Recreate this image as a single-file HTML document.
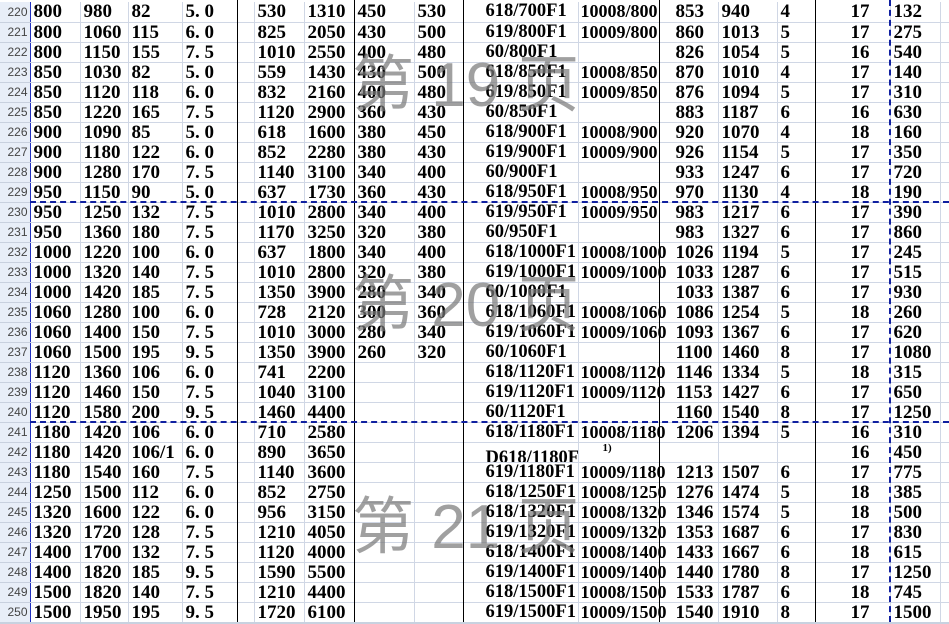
<!DOCTYPE html>
<html><head><meta charset="utf-8"><style>
body{margin:0;width:949px;height:624px;overflow:hidden;background:#fff;position:relative}
table{position:absolute;left:0;top:2px;border-collapse:collapse;table-layout:fixed;width:949px;font-family:"Liberation Serif",serif;font-weight:bold;font-size:19px;color:#000}
tr{height:20px}
td{box-sizing:border-box;height:20px;max-height:20px;line-height:19px;padding:0 0 0 3px;border-right:1px solid #d0d7e5;border-bottom:1px solid #d0d7e5;white-space:nowrap;overflow:hidden;vertical-align:middle}
td.h{background:#e8eef8;color:#444;font:12px "Liberation Sans",sans-serif;text-align:right;padding:0 2px 0 0;border-right:1px solid #2030c0;border-bottom:1px solid #c8d0de}
td.j{padding-left:22px;font-size:18.5px}
td.k{padding-left:2px;font-size:18px;overflow:visible}
td.l{padding-left:16px}
td.o{text-align:right;padding-right:20px}
.v{position:absolute;top:0;width:1px;height:622px;background:#000}
.wm{position:absolute;left:352px;font:62px "Liberation Sans","Noto Sans CJK SC",sans-serif;color:rgba(120,120,120,.7);white-space:pre;line-height:62px}
.dh{position:absolute;left:30px;width:919px;height:0;border-top:2px dashed #1020a0}
</style></head><body>
<table>
<colgroup><col style="width:30px"><col style="width:50px"><col style="width:48px"><col style="width:54px"><col style="width:55px"><col style="width:17px"><col style="width:50px"><col style="width:50px"><col style="width:60px"><col style="width:49px"><col style="width:115px"><col style="width:81px"><col style="width:59px"><col style="width:59px"><col style="width:38px"><col style="width:75px"><col style="width:50px"><col style="width:9px"></colgroup>
<tr><td class="h">220</td><td>800</td><td>980</td><td>82</td><td>5. 0</td><td></td><td>530</td><td>1310</td><td>450</td><td>530</td><td class="j">618/700F1</td><td class="k">10008/800</td><td class="l">853</td><td>940</td><td>4</td><td class="o">17</td><td>132</td><td></td></tr>
<tr><td class="h">221</td><td>800</td><td>1060</td><td>115</td><td>6. 0</td><td></td><td>825</td><td>2050</td><td>430</td><td>500</td><td class="j">619/800F1</td><td class="k">10009/800</td><td class="l">860</td><td>1013</td><td>5</td><td class="o">17</td><td>275</td><td></td></tr>
<tr><td class="h">222</td><td>800</td><td>1150</td><td>155</td><td>7. 5</td><td></td><td>1010</td><td>2550</td><td>400</td><td>480</td><td class="j">60/800F1</td><td class="k"></td><td class="l">826</td><td>1054</td><td>5</td><td class="o">16</td><td>540</td><td></td></tr>
<tr><td class="h">223</td><td>850</td><td>1030</td><td>82</td><td>5. 0</td><td></td><td>559</td><td>1430</td><td>430</td><td>500</td><td class="j">618/850F1</td><td class="k">10008/850</td><td class="l">870</td><td>1010</td><td>4</td><td class="o">17</td><td>140</td><td></td></tr>
<tr><td class="h">224</td><td>850</td><td>1120</td><td>118</td><td>6. 0</td><td></td><td>832</td><td>2160</td><td>400</td><td>480</td><td class="j">619/850F1</td><td class="k">10009/850</td><td class="l">876</td><td>1094</td><td>5</td><td class="o">17</td><td>310</td><td></td></tr>
<tr><td class="h">225</td><td>850</td><td>1220</td><td>165</td><td>7. 5</td><td></td><td>1120</td><td>2900</td><td>360</td><td>430</td><td class="j">60/850F1</td><td class="k"></td><td class="l">883</td><td>1187</td><td>6</td><td class="o">16</td><td>630</td><td></td></tr>
<tr><td class="h">226</td><td>900</td><td>1090</td><td>85</td><td>5. 0</td><td></td><td>618</td><td>1600</td><td>380</td><td>450</td><td class="j">618/900F1</td><td class="k">10008/900</td><td class="l">920</td><td>1070</td><td>4</td><td class="o">18</td><td>160</td><td></td></tr>
<tr><td class="h">227</td><td>900</td><td>1180</td><td>122</td><td>6. 0</td><td></td><td>852</td><td>2280</td><td>380</td><td>430</td><td class="j">619/900F1</td><td class="k">10009/900</td><td class="l">926</td><td>1154</td><td>5</td><td class="o">17</td><td>350</td><td></td></tr>
<tr><td class="h">228</td><td>900</td><td>1280</td><td>170</td><td>7. 5</td><td></td><td>1140</td><td>3100</td><td>340</td><td>400</td><td class="j">60/900F1</td><td class="k"></td><td class="l">933</td><td>1247</td><td>6</td><td class="o">17</td><td>720</td><td></td></tr>
<tr><td class="h">229</td><td>950</td><td>1150</td><td>90</td><td>5. 0</td><td></td><td>637</td><td>1730</td><td>360</td><td>430</td><td class="j">618/950F1</td><td class="k">10008/950</td><td class="l">970</td><td>1130</td><td>4</td><td class="o">18</td><td>190</td><td></td></tr>
<tr><td class="h">230</td><td>950</td><td>1250</td><td>132</td><td>7. 5</td><td></td><td>1010</td><td>2800</td><td>340</td><td>400</td><td class="j">619/950F1</td><td class="k">10009/950</td><td class="l">983</td><td>1217</td><td>6</td><td class="o">17</td><td>390</td><td></td></tr>
<tr><td class="h">231</td><td>950</td><td>1360</td><td>180</td><td>7. 5</td><td></td><td>1170</td><td>3250</td><td>320</td><td>380</td><td class="j">60/950F1</td><td class="k"></td><td class="l">983</td><td>1327</td><td>6</td><td class="o">17</td><td>860</td><td></td></tr>
<tr><td class="h">232</td><td>1000</td><td>1220</td><td>100</td><td>6. 0</td><td></td><td>637</td><td>1800</td><td>340</td><td>400</td><td class="j">618/1000F1</td><td class="k">10008/1000</td><td class="l">1026</td><td>1194</td><td>5</td><td class="o">17</td><td>245</td><td></td></tr>
<tr><td class="h">233</td><td>1000</td><td>1320</td><td>140</td><td>7. 5</td><td></td><td>1010</td><td>2800</td><td>320</td><td>380</td><td class="j">619/1000F1</td><td class="k">10009/1000</td><td class="l">1033</td><td>1287</td><td>6</td><td class="o">17</td><td>515</td><td></td></tr>
<tr><td class="h">234</td><td>1000</td><td>1420</td><td>185</td><td>7. 5</td><td></td><td>1350</td><td>3900</td><td>280</td><td>340</td><td class="j">60/1000F1</td><td class="k"></td><td class="l">1033</td><td>1387</td><td>6</td><td class="o">17</td><td>930</td><td></td></tr>
<tr><td class="h">235</td><td>1060</td><td>1280</td><td>100</td><td>6. 0</td><td></td><td>728</td><td>2120</td><td>300</td><td>360</td><td class="j">618/1060F1</td><td class="k">10008/1060</td><td class="l">1086</td><td>1254</td><td>5</td><td class="o">18</td><td>260</td><td></td></tr>
<tr><td class="h">236</td><td>1060</td><td>1400</td><td>150</td><td>7. 5</td><td></td><td>1010</td><td>3000</td><td>280</td><td>340</td><td class="j">619/1060F1</td><td class="k">10009/1060</td><td class="l">1093</td><td>1367</td><td>6</td><td class="o">17</td><td>620</td><td></td></tr>
<tr><td class="h">237</td><td>1060</td><td>1500</td><td>195</td><td>9. 5</td><td></td><td>1350</td><td>3900</td><td>260</td><td>320</td><td class="j">60/1060F1</td><td class="k"></td><td class="l">1100</td><td>1460</td><td>8</td><td class="o">17</td><td>1080</td><td></td></tr>
<tr><td class="h">238</td><td>1120</td><td>1360</td><td>106</td><td>6. 0</td><td></td><td>741</td><td>2200</td><td></td><td></td><td class="j">618/1120F1</td><td class="k">10008/1120</td><td class="l">1146</td><td>1334</td><td>5</td><td class="o">18</td><td>315</td><td></td></tr>
<tr><td class="h">239</td><td>1120</td><td>1460</td><td>150</td><td>7. 5</td><td></td><td>1040</td><td>3100</td><td></td><td></td><td class="j">619/1120F1</td><td class="k">10009/1120</td><td class="l">1153</td><td>1427</td><td>6</td><td class="o">17</td><td>650</td><td></td></tr>
<tr><td class="h">240</td><td>1120</td><td>1580</td><td>200</td><td>9. 5</td><td></td><td>1460</td><td>4400</td><td></td><td></td><td class="j">60/1120F1</td><td class="k"></td><td class="l">1160</td><td>1540</td><td>8</td><td class="o">17</td><td>1250</td><td></td></tr>
<tr><td class="h">241</td><td>1180</td><td>1420</td><td>106</td><td>6. 0</td><td></td><td>710</td><td>2580</td><td></td><td></td><td class="j">618/1180F1</td><td class="k">10008/1180</td><td class="l">1206</td><td>1394</td><td>5</td><td class="o">16</td><td>310</td><td></td></tr>
<tr><td class="h">242</td><td>1180</td><td>1420</td><td>106/1</td><td>6. 0</td><td></td><td>890</td><td>3650</td><td></td><td></td><td class="j"><span style="position:relative;top:6px">D618/1180F1</span></td><td class="k" style="font-size:11px;padding-left:24px;overflow:hidden"><span style="position:relative;top:-4px">1)</span></td><td class="l"></td><td></td><td></td><td class="o">16</td><td>450</td><td></td></tr>
<tr><td class="h">243</td><td>1180</td><td>1540</td><td>160</td><td>7. 5</td><td></td><td>1140</td><td>3600</td><td></td><td></td><td class="j">619/1180F1</td><td class="k">10009/1180</td><td class="l">1213</td><td>1507</td><td>6</td><td class="o">17</td><td>775</td><td></td></tr>
<tr><td class="h">244</td><td>1250</td><td>1500</td><td>112</td><td>6. 0</td><td></td><td>852</td><td>2750</td><td></td><td></td><td class="j">618/1250F1</td><td class="k">10008/1250</td><td class="l">1276</td><td>1474</td><td>5</td><td class="o">18</td><td>385</td><td></td></tr>
<tr><td class="h">245</td><td>1320</td><td>1600</td><td>122</td><td>6. 0</td><td></td><td>956</td><td>3150</td><td></td><td></td><td class="j">618/1320F1</td><td class="k">10008/1320</td><td class="l">1346</td><td>1574</td><td>5</td><td class="o">18</td><td>500</td><td></td></tr>
<tr><td class="h">246</td><td>1320</td><td>1720</td><td>128</td><td>7. 5</td><td></td><td>1210</td><td>4050</td><td></td><td></td><td class="j">619/1320F1</td><td class="k">10009/1320</td><td class="l">1353</td><td>1687</td><td>6</td><td class="o">17</td><td>830</td><td></td></tr>
<tr><td class="h">247</td><td>1400</td><td>1700</td><td>132</td><td>7. 5</td><td></td><td>1120</td><td>4000</td><td></td><td></td><td class="j">618/1400F1</td><td class="k">10008/1400</td><td class="l">1433</td><td>1667</td><td>6</td><td class="o">18</td><td>615</td><td></td></tr>
<tr><td class="h">248</td><td>1400</td><td>1820</td><td>185</td><td>9. 5</td><td></td><td>1590</td><td>5500</td><td></td><td></td><td class="j">619/1400F1</td><td class="k">10009/1400</td><td class="l">1440</td><td>1780</td><td>8</td><td class="o">17</td><td>1250</td><td></td></tr>
<tr><td class="h">249</td><td>1500</td><td>1820</td><td>140</td><td>7. 5</td><td></td><td>1210</td><td>4400</td><td></td><td></td><td class="j">618/1500F1</td><td class="k">10008/1500</td><td class="l">1533</td><td>1787</td><td>6</td><td class="o">18</td><td>745</td><td></td></tr>
<tr><td class="h">250</td><td>1500</td><td>1950</td><td>195</td><td>9. 5</td><td></td><td>1720</td><td>6100</td><td></td><td></td><td class="j">619/1500F1</td><td class="k">10009/1500</td><td class="l">1540</td><td>1910</td><td>8</td><td class="o">17</td><td>1500</td><td></td></tr>
</table>
<div class="v" style="left:237px"></div>
<div class="v" style="left:354px"></div>
<div class="v" style="left:463px"></div>
<div class="v" style="left:659px"></div>
<div class="v" style="left:815px"></div>
<div style="position:absolute;left:889px;top:0;height:622px;border-left:2px dashed #1020a0"></div>
<div class="dh" style="top:201px"></div>
<div class="dh" style="top:421px"></div>
<div class="wm" style="top:55px">第 19 页</div>
<div class="wm" style="top:275px">第 20 页</div>
<div class="wm" style="top:497px">第 21 页</div>
<div style="position:absolute;left:0;top:622px;width:949px;height:2px;background:#c8d2e0"></div>
</body></html>
